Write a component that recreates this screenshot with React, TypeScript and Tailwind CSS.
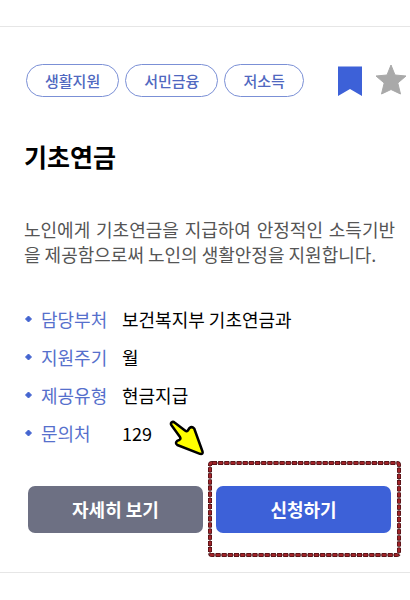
import React from 'react';

const tags = ['생활지원', '서민금융', '저소득'];

const details = [
  { label: '담당부처', value: '보건복지부 기초연금과' },
  { label: '지원주기', value: '월' },
  { label: '제공유형', value: '현금지급' },
  { label: '문의처', value: '129' },
];

export default function App() {
  return (
    <main className="min-h-screen bg-white pt-[26px] font-['Noto_Sans_CJK_KR',sans-serif] text-black">
      <article className="border-y border-[#e6e6e6] pt-[37px] pr-[15px] pb-[39px] pl-6">
        {/* Tags and bookmark icons */}
        <div className="flex items-center justify-between pl-[2px]">
          <ul className="flex gap-[6px]">
            {tags.map((tag) => (
              <li
                key={tag}
                className="h-[33px] rounded-full border border-[#7b90d6] px-[18px] text-[15px] leading-[31px] font-medium text-[#5068c0]"
              >
                {tag}
              </li>
            ))}
          </ul>
          <div className="-mr-[12px] flex items-center gap-[12px]">
            <button aria-label="북마크" className="h-[33px] w-[26px]">
              <svg viewBox="0 0 26 33" className="h-full w-full" fill="#3d61d8">
                <path d="M1 2.500h24v29.500L13 25 1 32z" />
              </svg>
            </button>
            <button aria-label="즐겨찾기" className="h-[33px] w-[32px]">
              <svg viewBox="0 0 32 33" className="h-full w-full" fill="#a9a9a9" stroke="#a9a9a9" strokeWidth="1" strokeLinejoin="round">
                <path d="M16 1 20 11 31 12 22.800 19 25.500 30 16 25.500 6.500 30 9.200 19 1 12 12 11z" />
              </svg>
            </button>
          </div>
        </div>

        <h2 className="mt-[41px] text-[25px] leading-[36px] font-bold">기초연금</h2>

        <p className="mt-[43px] text-justify text-[18px] leading-[25px] break-all text-[#555]">
          노인에게 기초연금을 지급하여 안정적인 소득기반을 제공함으로써 노인의 생활안정을 지원합니다.
        </p>

        {/* Detail list */}
        <dl className="mt-[39px] flex flex-col gap-[12px]">
          {details.map((item) => (
            <div key={item.label} className="flex items-center text-[18px] leading-[26px]">
              <dt className="flex w-[98px] items-center gap-[9px] text-[#5670cc]">
                <svg viewBox="0 0 8 8" className="h-2 w-2" fill="#4465d0" stroke="#4465d0" strokeWidth="1" strokeLinejoin="round">
                  <path d="M4.500 1 7.500 4 4.500 7 1.500 4z" />
                </svg>
                {item.label}
              </dt>
              <dd>{item.value}</dd>
            </div>
          ))}
        </dl>

        <div className="mt-[40px] flex gap-[13px] px-1">
          <button className="h-[47px] flex-1 rounded-[7px] bg-[#6d7083] text-[18px] font-bold text-white">
            자세히 보기
          </button>
          <div className="relative flex-1">
            <button className="h-[47px] w-full rounded-[7px] bg-[#3d61d8] text-[18px] font-bold text-white">
              신청하기
            </button>

            {/* Highlight frame */}
            <div className="pointer-events-none absolute -top-[23px] -right-[8px] -bottom-[22px] -left-[6px]">
              <svg className="h-full w-full overflow-visible" fill="none">
                <rect width="100%" height="100%" rx="2" stroke="#4a1215" strokeWidth="1" />
                <rect width="100%" height="100%" rx="2" stroke="#4a1014" strokeWidth="4" strokeDasharray="5 1.150" />
                <rect width="100%" height="100%" rx="2" stroke="#a12328" strokeWidth="2.600" strokeDasharray="3.800 2.350" strokeDashoffset="-0.600" />
              </svg>
            </div>

            {/* Pointer arrow */}
            <svg viewBox="0 0 36 36" className="pointer-events-none absolute -top-[66px] -left-[47px] h-9 w-9">
              <path
                d="M2.500 2.500Q4 1.200 5.500 2.500L16 10.500Q18 12 19 10.300L20.500 8Q23 6 25.200 8.500L33.500 31.500Q34.300 34.500 31 33.800L8.300 25Q5.700 23.200 8.200 20.800L10.500 19.800Q12 18.800 11 17L2.300 5Q1.500 3.500 2.500 2.500z"
                fill="#ffff00"
                stroke="#000"
                strokeWidth="2.500"
                strokeLinejoin="round"
              />
            </svg>
          </div>
        </div>
      </article>
    </main>
  );
}
